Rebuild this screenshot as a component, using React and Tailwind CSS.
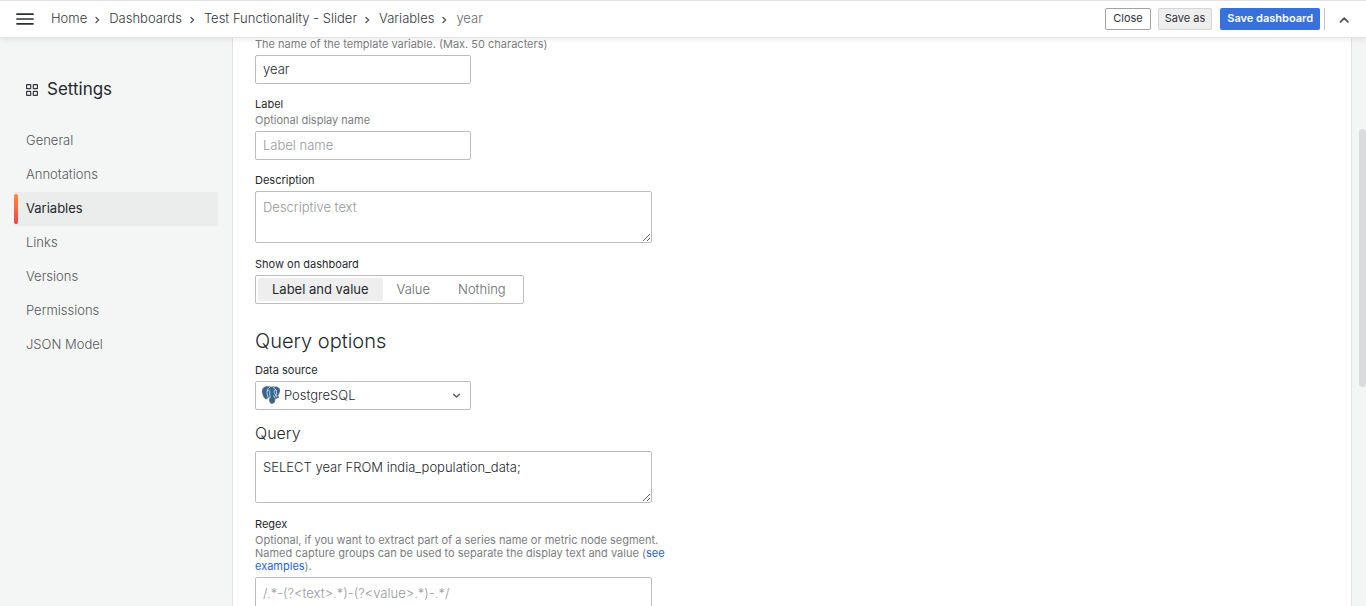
import { useState } from 'react'

const crumbs = ['Home', 'Dashboards', 'Test Functionality - Slider', 'Variables']

const navItems = ['General', 'Annotations', 'Variables', 'Links', 'Versions', 'Permissions', 'JSON Model']

const hideOptions = ['Label and value', 'Value', 'Nothing']

const boxClass =
  'rounded-[2px] border border-[#bcbdbe] bg-white text-[13px] text-[#24292e] placeholder:text-[#96989b] outline-none focus:border-[#3871dc]'

export default function App() {
  return (
    <div className="flex h-screen flex-col overflow-hidden bg-[#f4f5f5] font-['Inter',sans-serif] text-[13px] font-light text-[#24292e]">
      <TopBar />
      <div className="flex min-h-0 flex-1">
        <Sidebar />
        <main className="min-w-0 flex-1 overflow-hidden border-x border-[#e1e2e3] bg-white pl-[22px]">
          <VariableForm />
        </main>
        {/* Scrollbar */}
        <div className="flex w-3.5 shrink-0 justify-end pt-[91px]">
          <div className="h-[258px] w-[7px] rounded-full bg-[#dadbdc]" />
        </div>
      </div>
    </div>
  )
}

function TopBar() {
  return (
    <header className="z-10 flex h-[38px] shrink-0 items-center border-y border-[#e1e2e3] bg-white pr-4 pl-4 shadow-[0_1px_6px_rgba(24,26,27,0.1)]">
      <button aria-label="Toggle menu" className="mr-[17px]">
        <svg width="18" height="12" viewBox="0 0 18 12" className="block" fill="none" stroke="#2b2f34" strokeWidth="1.7" strokeLinecap="round">
          <path d="M1 1.200h16M1 6h16M1 10.800h16" />
        </svg>
      </button>
      <nav aria-label="Breadcrumbs">
        <ol className="flex items-center">
          {crumbs.map((crumb) => (
            <li key={crumb} className="flex items-center text-[#33373b]">
              <a href="#">{crumb}</a>
              <svg width="22" height="9" viewBox="0 0 22 9" className="block" fill="none" stroke="#55585c" strokeWidth="1.4" strokeLinecap="round" strokeLinejoin="round">
                <path d="M9 2.400l2.600 2.600L9 7.600" />
              </svg>
            </li>
          ))}
          <li className="text-[#66696c]" aria-current="page">year</li>
        </ol>
      </nav>
      <div className="ml-auto flex items-center text-[11px] font-normal">
        <button className="mr-[7px] h-[22px] rounded-[2px] border border-[#a0a2a4] px-[7px] pb-px text-[#2d3136]">Close</button>
        <button className="mr-2 h-[22px] rounded-[2px] border border-[#d4d5d6] bg-[#eeeeef] px-1.5 pb-px text-[#2d3136]">Save as</button>
        <button className="h-[22px] rounded-[2px] bg-[#3871dc] px-[7px] pb-px font-semibold text-white">Save dashboard</button>
        <div className="ml-1 h-[22px] w-px bg-[#c4c5c6]" />
        <button aria-label="Toggle top search bar" className="ml-3.5">
          <svg width="11" height="8" viewBox="0 0 11 8" className="block" fill="none" stroke="#4b4e52" strokeWidth="1.7" strokeLinecap="round" strokeLinejoin="round">
            <path d="M1.500 6.900l3.700-3.700 3.700 3.700" />
          </svg>
        </button>
      </div>
    </header>
  )
}

function Sidebar() {
  return (
    <aside className="w-[232px] shrink-0 px-3.5 pt-10">
      <h1 className="flex h-6 items-center pl-3 text-[17px] font-normal">
        <svg width="12" height="12" viewBox="0 0 12 12" className="mr-[9px]" fill="none" stroke="#34383c" strokeWidth="1.2">
          <rect x=".6" y=".6" width="4.1" height="4.1" rx=".4" />
          <rect x="7.3" y=".6" width="4.1" height="4.1" rx=".4" />
          <rect x=".6" y="7.3" width="4.1" height="4.1" rx=".4" />
          <rect x="7.3" y="7.3" width="4.1" height="4.1" rx=".4" />
        </svg>
        Settings
      </h1>
      <ul className="mt-[22px]">
        {navItems.map((item) => (
          <li key={item}>
            {item === 'Variables' ? (
              <a href="#" className="flex h-[34px] items-center rounded-[2px] bg-[#ebecec] pr-3 font-normal text-[#24292e]" aria-current="page">
                <span className="mr-2 h-[30px] w-1 rounded-[2px] bg-linear-to-b from-[#ff8833] to-[#f53e4c]" />
                {item}
              </a>
            ) : (
              <a href="#" className="flex h-[34px] items-center px-3 text-[#56595c]">{item}</a>
            )}
          </li>
        ))}
      </ul>
    </aside>
  )
}

function VariableForm() {
  const [hide, setHide] = useState('Label and value')

  return (
    <form className="-mt-[3px]">
      <Field id="name" hint="The name of the template variable. (Max. 50 characters)">
        <input id="name" aria-label="Name" defaultValue="year" className={'block h-[29px] w-[216px] px-[7px] pb-0.5 ' + boxClass} />
      </Field>
      <Field id="label" label="Label" hint="Optional display name">
        <input id="label" placeholder="Label name" className={'block h-[29px] w-[216px] px-[7px] pb-0.5 ' + boxClass} />
      </Field>
      <Field id="description" label="Description">
        <textarea id="description" placeholder="Descriptive text" className={'block h-[52px] w-[397px] px-[7px] py-1.5 leading-[18px] ' + boxClass} />
      </Field>

      <fieldset className="mt-3.5">
        <legend className="mb-1 text-[11px] leading-[14px] font-normal">Show on dashboard</legend>
        <div className="flex h-[29px] w-[269px] rounded-[2px] border border-[#bcbdbe] p-0.5">
          {hideOptions.map((option) => (
            <label
              key={option}
              className="flex cursor-pointer items-center rounded-[2px] px-3.5 text-[#66696c] has-checked:bg-[#eeeeee] has-checked:font-normal has-checked:text-[#24292e]"
            >
              <input
                type="radio"
                name="hide"
                className="sr-only"
                checked={hide === option}
                onChange={() => setHide(option)}
              />
              {option}
            </label>
          ))}
        </div>
      </fieldset>

      <h2 className="mt-6 mb-2 text-xl leading-[27px] font-light">Query options</h2>
      <Field id="datasource" label="Data source">
        <div className="relative w-[216px]">
          <select id="datasource" className={'block h-[29px] w-full appearance-none pr-7 pl-7 ' + boxClass}>
            <option>PostgreSQL</option>
          </select>
          <PostgresIcon />
          <svg width="9" height="6" viewBox="0 0 9 6" className="pointer-events-none absolute top-3 right-2.5" fill="none" stroke="#55585c" strokeWidth="1.4" strokeLinecap="round" strokeLinejoin="round">
            <path d="M1.600 1.300l2.900 2.800 2.900-2.800" />
          </svg>
        </div>
      </Field>

      <h3 className="mb-2 text-base leading-5 font-light">
        <label htmlFor="query">Query</label>
      </h3>
      <textarea
        id="query"
        defaultValue="SELECT year FROM india_population_data;"
        className={'mb-3.5 block h-[52px] w-[397px] px-[7px] py-1.5 leading-[18px] ' + boxClass}
      />

      <Field
        id="regex"
        label="Regex"
        hint={
          <>
            Optional, if you want to extract part of a series name or metric node segment. Named capture groups can be
            used to separate the display text and value (<a href="#" className="text-[#1f62e0]">see examples</a>).
          </>
        }
      >
        <textarea
          id="regex"
          placeholder="/.*-(?<text>.*)-(?<value>.*)-.*/"
          className={'block h-[52px] w-[397px] px-[7px] py-1.5 leading-[18px] ' + boxClass}
        />
      </Field>
    </form>
  )
}

function Field({ id, label, hint, children }) {
  return (
    <div className="mb-[13px]">
      {label && (
        <label htmlFor={id} className="block text-[11px] leading-[14px] font-normal">
          {label}
        </label>
      )}
      {hint && <p className="mt-[3px] w-[420px] text-[11px] leading-[13px] font-normal text-[#7b7d80]">{hint}</p>}
      <div className="mt-1">{children}</div>
    </div>
  )
}

function PostgresIcon() {
  return (
    <svg width="18" height="18" viewBox="0 0 38 38" className="pointer-events-none absolute top-[5px] left-[7px]" strokeLinecap="round" strokeLinejoin="round">
      <path
        d="M9 2C4 2 1 5 1 10c0 6 3 16 7 17 2 .5 4-1 5-3 1 1 2 1.500 3 1.500-.5 2 0 5 .5 7 .8 3 3 5 6 4 3-.8 4-3 4.500-6l.5-5c3 .5 6-.5 8-2.500-1 0-3 0-3.500-.5C35 18 38 11 37 7c-1-4-6-6-11-4.500C24 2 22 1.500 19 2.500 16 1.500 12 1.500 9 2z"
        fill="#336791"
        stroke="#5c6065"
        strokeWidth="2"
      />
      <path
        d="M13 24c-2-4-3-9-2-14 .5-3 2-5.500 5-7M11 10c2-1.500 5-1.500 5.500 1 .5 3-.5 5 0 8 .3 2 1 3 0 6M24 3c5 3 7 8 7 12-.5 3-2 6-.5 8M30 9c-2-1-4-.5-4.500 2 0 3 2 6 4 10M17 25c-1 2-4 2-5 3M27 25c0-2-1-4-3-4.500"
        fill="none"
        stroke="#d8e3ec"
        strokeWidth="1.800"
      />
    </svg>
  )
}
